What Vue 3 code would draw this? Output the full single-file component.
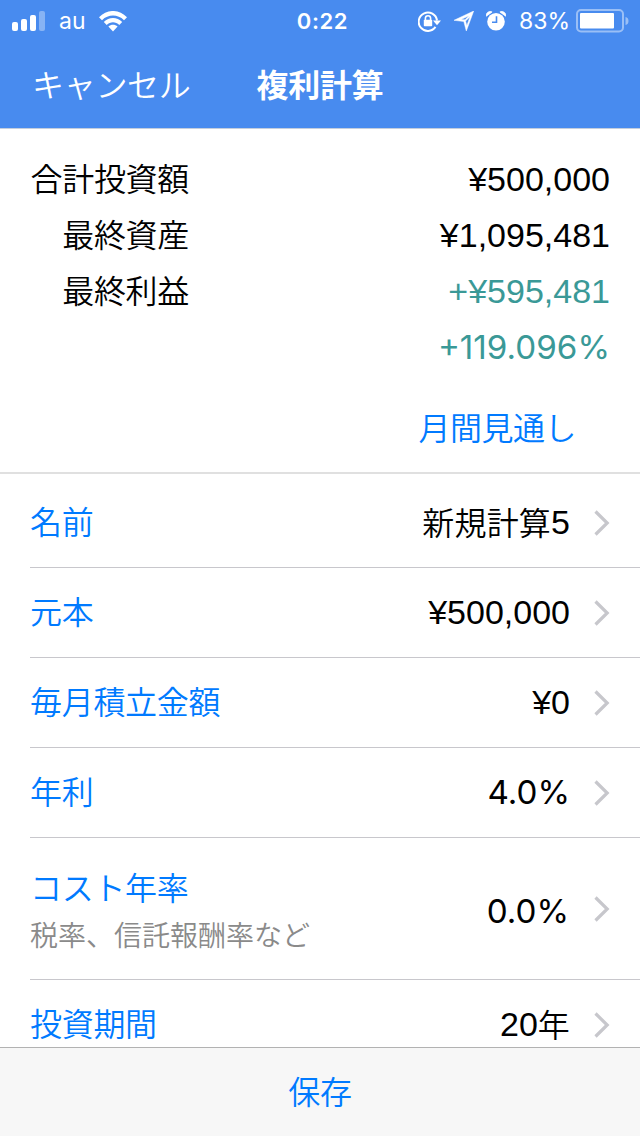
<script setup>
import { ref } from 'vue';

const summary = ref([
  { label: '合計投資額', value: '¥500,000' },
  { label: '最終資産', value: '¥1,095,481' },
  { label: '最終利益', value: '+¥595,481', profit: true },
  { label: '', value: '+119.096%', profit: true, ui: true },
]);

const rows = ref([
  { label: '名前', text: '新規計算', value: '5' },
  { label: '元本', value: '¥500,000' },
  { label: '毎月積立金額', value: '¥0' },
  { label: '年利', value: '4.0%', ui: true },
  { label: 'コスト年率', note: '税率、信託報酬率など', value: '0.0%', ui: true },
  { label: '投資期間', value: '20', unit: '年' },
]);
</script>

<template>
  <div class="screen">
    <header class="header">
      <div class="status-bar">
        <div class="status-left">
          <svg class="signal" width="34" height="20" viewBox="0 0 34 20">
            <rect x="0" y="11" width="6" height="9" rx="2" />
            <rect x="9" y="8" width="6" height="12" rx="2" />
            <rect x="18" y="4" width="6" height="16" rx="2" />
            <rect x="27" y="0" width="6" height="20" rx="2" opacity="0.35" />
          </svg>
          <span class="carrier">au</span>
          <svg class="wifi" width="28" height="21" viewBox="0 0 28 21">
            <path d="M0 6.2C8-2.1 20-2.1 28 6.2L25 9.2C18.8 3 9.2 3 3 9.2Z" />
            <path d="M4.8 11C10 5.7 18 5.7 23.2 11L20.3 13.9C16.7 10.4 11.3 10.4 7.7 13.9Z" />
            <path d="M9.4 15.6C12 13.2 16 13.2 18.6 15.6L14 20.5Z" />
          </svg>
        </div>
        <span class="clock">0:22</span>
        <div class="status-right">
          <svg class="lock" width="23" height="21" viewBox="0 0 23 21">
            <path d="M17.5 15.9A9.2 9.2 0 1 1 19 9.5" fill="none" stroke="#fff" stroke-width="2" />
            <path d="M15 9.5H23L19 14.2Z" />
            <rect x="5.8" y="8.8" width="8.4" height="6.4" rx="0.8" />
            <path d="M7.4 9.5V7.3A2.6 2.6 0 0 1 12.6 7.3V9.5" fill="none" stroke="#fff" stroke-width="1.6" />
          </svg>
          <svg class="location" width="20" height="20" viewBox="0 0 20 20">
            <path fill-rule="evenodd" d="M0 9.3L19.7 0L12.3 20L9.8 10.5ZM7 8.6L11 8.8L15 4.7ZM11.6 10.1L12.8 14.8L16 5.7Z" stroke="#fff" stroke-width="0.5" />
          </svg>
          <svg class="alarm" width="20" height="20" viewBox="0 0 20 20">
            <circle cx="10" cy="10.8" r="8.8" />
            <path d="M0.3 5.2A4 4 0 0 1 6.1 0.9Z" stroke="#fff" stroke-width="0.8" />
            <path d="M19.7 5.2A4 4 0 0 0 13.9 0.9Z" stroke="#fff" stroke-width="0.8" />
            <path d="M10.5 5.3V11.3H6" fill="none" stroke="#488bef" stroke-width="1.6" />
          </svg>
          <span class="percent">83%</span>
          <svg class="battery" width="53" height="24" viewBox="0 0 53 24">
            <rect x="1" y="1" width="46" height="21.5" rx="4" fill="none" stroke="#fff" stroke-width="2" opacity="0.45" />
            <rect x="4" y="4" width="34" height="15.5" rx="1" />
            <path d="M49.5 8Q52.5 8.5 52.5 12T49.5 16Z" opacity="0.45" />
          </svg>
        </div>
      </div>
      <nav class="nav">
        <span class="cancel">キャンセル</span>
        <h1 class="title">複利計算</h1>
      </nav>
    </header>

    <section class="summary">
      <div v-for="item in summary" :key="item.value" class="summary-row">
        <span class="summary-label">{{ item.label }}</span>
        <span class="amount" :class="{ profit: item.profit, ui: item.ui }">{{ item.value }}</span>
      </div>
      <div class="outlook">月間見通し</div>
    </section>

    <main class="list">
      <div v-for="row in rows" :key="row.label" class="row" :class="{ tall: row.note }">
        <div class="row-label">
          <div class="name">{{ row.label }}</div>
          <div v-if="row.note" class="note">{{ row.note }}</div>
        </div>
        <div class="row-value">
          <span v-if="row.text" class="kanji">{{ row.text }}</span>
          <span class="amount" :class="{ ui: row.ui }">{{ row.value }}</span>
          <span v-if="row.unit" class="kanji">{{ row.unit }}</span>
        </div>
        <svg class="chevron" width="16" height="26" viewBox="0 0 16 26">
          <path d="M1.5 1.5L13.2 13L1.5 24.5" fill="none" stroke="#c7c7cc" stroke-width="3.2" />
        </svg>
      </div>
    </main>

    <footer class="toolbar">保存</footer>
  </div>
</template>

<style>
body {
  margin: 0;
  background: #fff;
}
</style>

<style scoped>
.screen {
  display: flex;
  flex-direction: column;
  width: 640px;
  height: 1136px;
  overflow: hidden;
  font-family: 'Noto Sans CJK JP', sans-serif;
  font-size: 32px;
  font-weight: 350;
  line-height: 48px;
  letter-spacing: -0.3px;
  white-space: nowrap;
  color: #000;
}

.header {
  flex: none;
  box-sizing: border-box;
  height: 129px;
  background: #488bef;
  color: #fff;
  border-bottom: 1px solid #c3cede;
}

.status-bar {
  display: grid;
  grid-template-columns: 1fr auto 1fr;
  align-items: center;
  height: 40px;
  padding: 1px 11px 0 12px;
  font-family: Inter, sans-serif;
  font-size: 23px;
  font-weight: 400;
  line-height: 40px;
  letter-spacing: 0;
}

.status-bar svg {
  flex: none;
  fill: #fff;
}

.status-left,
.status-right {
  display: flex;
  align-items: center;
}

.status-right {
  justify-content: flex-end;
}

.carrier {
  margin: 0 13px;
}

.clock {
  padding-left: 4px;
  font-size: 22px;
  font-weight: 600;
  letter-spacing: 0.6px;
}

.location {
  margin-left: 13px;
}

.alarm {
  margin-left: 12px;
}

.percent {
  margin: 0 6px 0 13px;
}

.nav {
  display: grid;
  grid-template-columns: 1fr auto 1fr;
  align-items: center;
  height: 84px;
  padding: 0 32px;
}

.title {
  margin: 0;
  font-size: 32px;
  font-weight: 700;
}

.summary {
  flex: none;
  box-sizing: border-box;
  height: 345px;
  padding: 22px 30px 0;
  border-bottom: 2px solid #e0e0e0;
}

.summary-row {
  display: flex;
  align-items: center;
  height: 56px;
}

.summary-label {
  width: 159px;
  padding-bottom: 4px;
  text-align: right;
}

.summary-row .amount {
  margin-left: auto;
  padding-bottom: 1px;
}

.amount {
  font-family: 'Liberation Sans', sans-serif;
  font-size: 34px;
  font-weight: 400;
  letter-spacing: 0;
}

.amount.ui {
  font-family: Inter, sans-serif;
  font-size: 33.2px;
}

.summary-row .amount.ui {
  padding-bottom: 0;
}

.amount.profit {
  color: #3a9997;
}

.outlook {
  margin: 27px 34px 0 0;
  text-align: right;
  letter-spacing: -0.5px;
  color: #007aff;
}

.list {
  flex: 1;
  min-height: 0;
  padding: 4px 0 0 30px;
  overflow: hidden;
}

.row {
  box-sizing: border-box;
  display: flex;
  align-items: center;
  height: 90px;
  padding-right: 30px;
  border-bottom: 1px solid #c8c7cc;
}

.row.tall {
  height: 142px;
}

.name {
  padding-bottom: 5px;
  color: #007aff;
}

.tall .name {
  padding: 2px 0 0;
}

.note {
  padding-top: 1px;
  font-size: 28px;
  line-height: 46px;
  letter-spacing: 0;
  color: #8a8a8a;
}

.row-value {
  display: flex;
  align-items: center;
  margin-left: auto;
  margin-right: 24px;
  padding-bottom: 2px;
}

.tall .row-value {
  padding: 4px 1px 0 0;
}

.kanji {
  padding-bottom: 2px;
  letter-spacing: 0.2px;
}

.toolbar {
  flex: none;
  box-sizing: border-box;
  height: 89px;
  border-top: 1px solid #b2b2b2;
  background: #f7f7f7;
  line-height: 84px;
  text-align: center;
  color: #007aff;
}
</style>
